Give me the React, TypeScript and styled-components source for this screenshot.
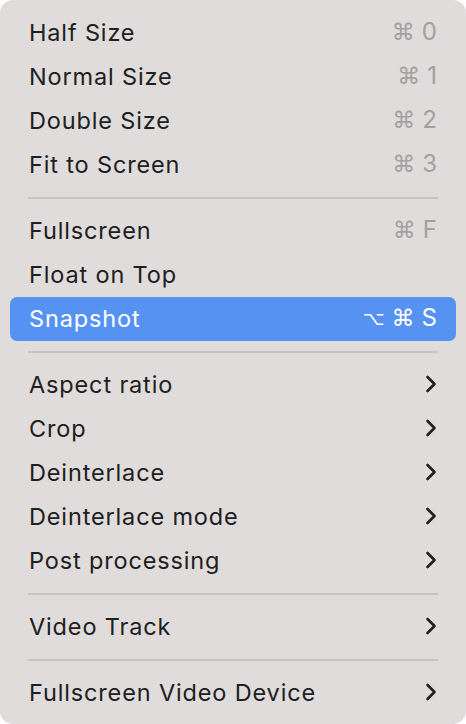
import React from 'react';
import styled, { createGlobalStyle } from 'styled-components';

const GlobalStyle = createGlobalStyle`
  html, body {
    margin: 0;
    padding: 0;
    background: #ffffff;
  }
  body {
    font-family: Inter, "Noto Sans", "DejaVu Sans", sans-serif;
    -webkit-font-smoothing: antialiased;
  }
`;

const Menu = styled.div`
  width: 466px;
  height: 724px;
  box-sizing: border-box;
  background: #dfdcdb;
  border-radius: 13px;
  padding: 11px 10px 9px;
  display: flex;
  flex-direction: column;
`;

const Row = styled.div<{ $active?: boolean }>`
  height: 44px;
  box-sizing: border-box;
  padding: 0 19px 2px 19px;
  display: flex;
  align-items: center;
  justify-content: space-between;
  border-radius: 7px;
  font-size: 23.5px;
  letter-spacing: 0.85px;
  color: ${(p) => (p.$active ? '#ffffff' : '#202020')};
  background: ${(p) => (p.$active ? '#5692f2' : 'transparent')};
`;

const Label = styled.span``;

const Shortcut = styled.span<{ $active?: boolean }>`
  display: flex;
  align-items: center;
  gap: 7px;
  letter-spacing: 0;
  color: ${(p) => (p.$active ? '#ffffff' : '#a3a09f')};
`;

const Glyph = styled.span<{ $size: number }>`
  font-family: "DejaVu Sans", sans-serif;
  font-size: ${(p) => p.$size}px;
  line-height: 1;
`;

const Key = styled.span`
  font-size: 24px;
  line-height: 1;
`;

const Separator = styled.div`
  height: 22px;
  display: flex;
  align-items: center;
  padding: 0 18px;
  &::after {
    content: '';
    flex: 1;
    height: 2px;
    background: #c7c4c3;
  }
`;

const Chevron = () => (
  <svg width="12" height="18" viewBox="0 0 12 18">
    <path d="M2.5 2 L9.5 9 L2.5 16" fill="none" stroke="#202020" strokeWidth="2.6" strokeLinecap="round" strokeLinejoin="round" />
  </svg>
);

type Item =
  | { kind: 'sep' }
  | { kind: 'item'; label: string; keys?: string[]; active?: boolean; submenu?: boolean };

const items: Item[] = [
  { kind: 'item', label: 'Half Size', keys: ['⌘', '0'] },
  { kind: 'item', label: 'Normal Size', keys: ['⌘', '1'] },
  { kind: 'item', label: 'Double Size', keys: ['⌘', '2'] },
  { kind: 'item', label: 'Fit to Screen', keys: ['⌘', '3'] },
  { kind: 'sep' },
  { kind: 'item', label: 'Fullscreen', keys: ['⌘', 'F'] },
  { kind: 'item', label: 'Float on Top' },
  { kind: 'item', label: 'Snapshot', keys: ['⌥', '⌘', 'S'], active: true },
  { kind: 'sep' },
  { kind: 'item', label: 'Aspect ratio', submenu: true },
  { kind: 'item', label: 'Crop', submenu: true },
  { kind: 'item', label: 'Deinterlace', submenu: true },
  { kind: 'item', label: 'Deinterlace mode', submenu: true },
  { kind: 'item', label: 'Post processing', submenu: true },
  { kind: 'sep' },
  { kind: 'item', label: 'Video Track', submenu: true },
  { kind: 'sep' },
  { kind: 'item', label: 'Fullscreen Video Device', submenu: true },
];

export default function App() {
  return (
    <>
      <GlobalStyle />
      <Menu>
        {items.map((it, i) =>
          it.kind === 'sep' ? (
            <Separator key={i} />
          ) : (
            <Row key={i} $active={it.active}>
              <Label>{it.label}</Label>
              {it.keys && (
                <Shortcut $active={it.active}>
                  {it.keys.map((k, j) =>
                    k === '⌘' || k === '⌥' ? (
                      <Glyph key={j} $size={k === '⌥' ? 19 : 23}>{k}</Glyph>
                    ) : (
                      <Key key={j}>{k}</Key>
                    )
                  )}
                </Shortcut>
              )}
              {it.submenu && <Chevron />}
            </Row>
          )
        )}
      </Menu>
    </>
  );
}
